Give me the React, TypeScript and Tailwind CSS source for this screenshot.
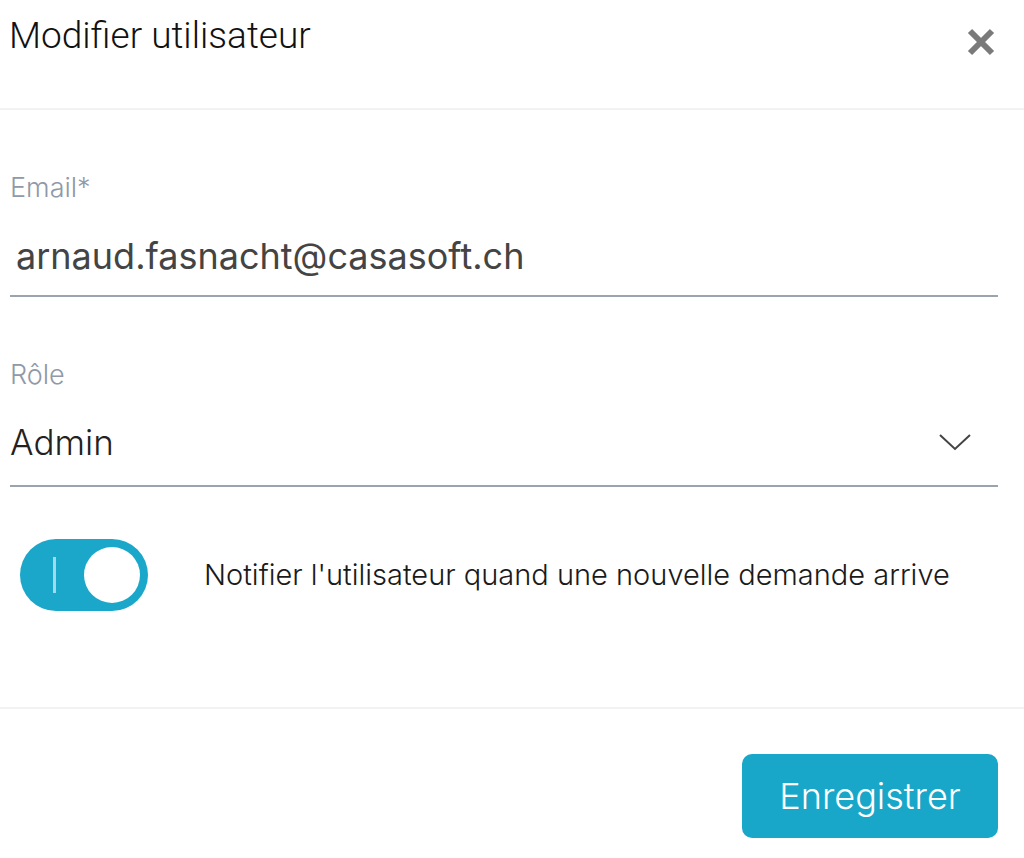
import { useState } from "react";

export default function App() {
  const [notify, setNotify] = useState(true);

  return (
    <div className="min-h-screen w-[1024px] bg-white font-['Inter',sans-serif]">
      <div className="flex h-[110px] items-start justify-between border-b-2 border-[#f2f2f2] pl-[9px] pr-[28px] pt-[13px]">
        <h1 className="font-['Roboto',sans-serif] text-[37px] font-light leading-[46px] text-[#111]">
          Modifier utilisateur
        </h1>
        <button className="mt-[14px] text-[#7a7a7a]">
          <svg width="30" height="30" viewBox="0 0 30 30">
            <path d="M4 4 L26 26 M26 4 L4 26" stroke="currentColor" strokeWidth="6" />
          </svg>
        </button>
      </div>

      <div className="flex flex-col pl-[10px] pr-[26px] pt-[62px]">
        <label className="text-[27px] font-light leading-[32px] text-[#8f99a8]">Email*</label>
        <div className="mt-[31px] border-b-2 border-[#9aa3ae] pb-[18px] pl-[6px] text-[36px] leading-[42px] text-[#444]">
          arnaud.fasnacht@casasoft.ch
        </div>

        <label className="mt-[62px] text-[27px] font-light leading-[32px] text-[#8f99a8]">Rôle</label>
        <div className="mt-[30px] flex items-center justify-between border-b-2 border-[#9aa3ae] pb-[22px]">
          <span className="text-[35px] font-light leading-[42px] text-[#222]">Admin</span>
          <svg width="34" height="22" viewBox="0 0 34 22" className="mr-[26px] text-[#444]">
            <path d="M2 4 L17 18 L32 4" fill="none" stroke="currentColor" strokeWidth="2" />
          </svg>
        </div>

        <div className="mt-[52px] flex items-center gap-[56px] pl-[10px]">
          <button
            onClick={() => setNotify(!notify)}
            className="relative flex h-[72px] w-[128px] items-center rounded-full bg-[#1aa7c9]"
          >
            <span className="ml-[33px] h-[36px] w-[3px] bg-[#9fdbe9]" />
            <span className="absolute right-[8px] top-[8px] h-[56px] w-[56px] rounded-full bg-white" />
          </button>
          <span className="text-[29px] font-light leading-[36px] text-[#1a1a1a]">
            Notifier l'utilisateur quand une nouvelle demande arrive
          </span>
        </div>
      </div>

      <div className="mt-[96px] border-t-2 border-[#f2f2f2]" />

      <div className="flex justify-end pr-[26px] pt-[45px]">
        <button className="h-[84px] w-[256px] rounded-[10px] bg-[#19a7c9] text-[36px] font-light text-white">
          Enregistrer
        </button>
      </div>
    </div>
  );
}
